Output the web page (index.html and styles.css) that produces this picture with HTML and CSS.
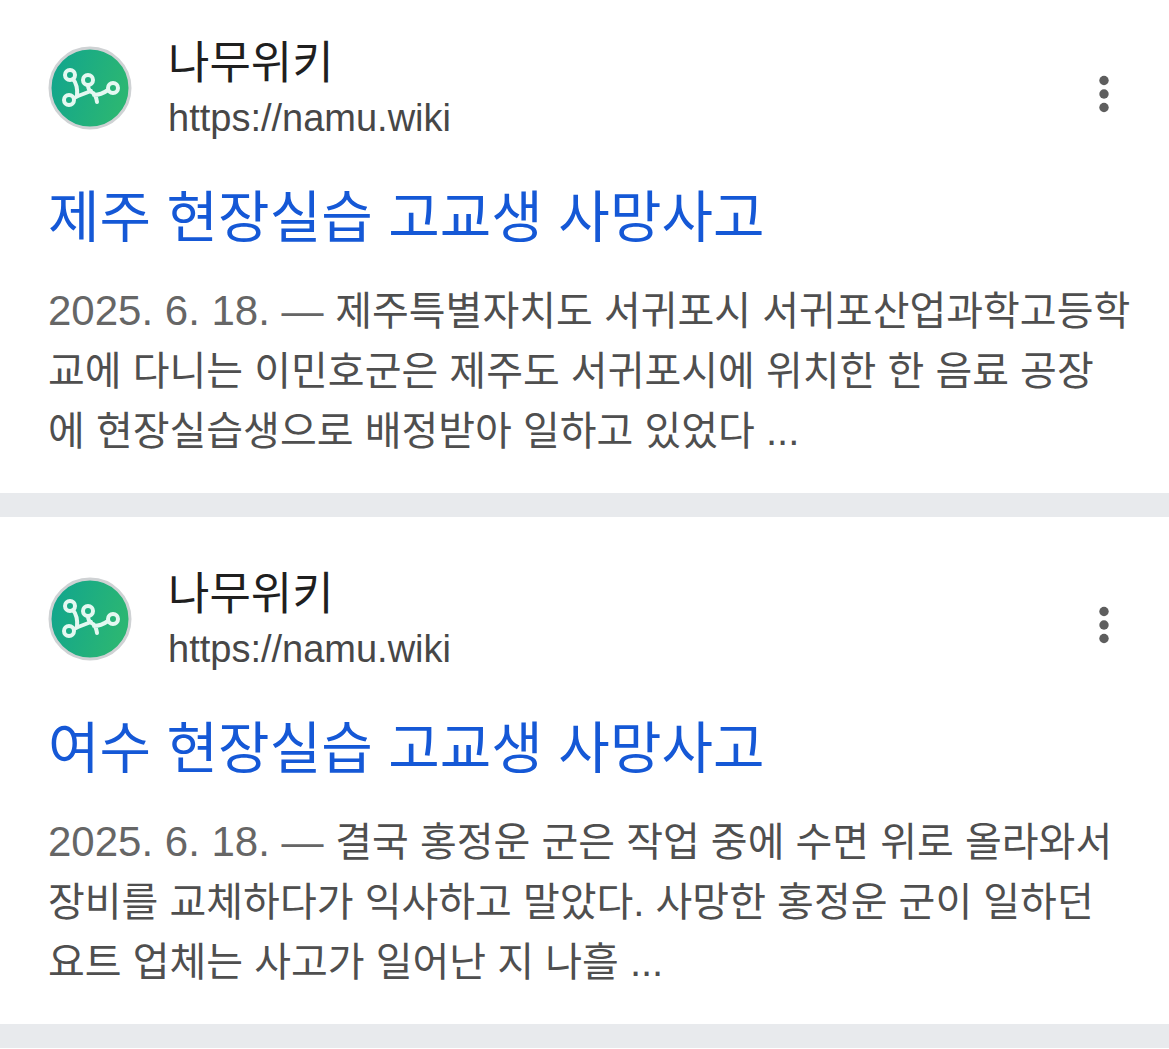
FILE: index.html
```html
<!DOCTYPE html>
<html lang="ko">
<head>
<meta charset="UTF-8">
<meta name="viewport" content="width=device-width, initial-scale=1.0">
<title>현장실습 고교생 사망사고</title>
<link rel="stylesheet" href="styles.css">
</head>
<body>
<svg class="sprite" aria-hidden="true">
  <symbol id="namu" viewBox="0 0 84 84">
    <linearGradient id="leaf" x1="0" y1="0" x2="1" y2="0.3">
      <stop offset="0" stop-color="#0fa48f"/>
      <stop offset="1" stop-color="#2bb673"/>
    </linearGradient>
    <circle cx="42" cy="42" r="40" fill="url(#leaf)" stroke="#cfd2d4" stroke-width="3"/>
    <g fill="none" stroke="#e4f8f1" stroke-width="4" stroke-linecap="round" stroke-linejoin="round">
      <circle cx="22" cy="29" r="5"/>
      <circle cx="40" cy="34" r="5"/>
      <circle cx="21" cy="54" r="5"/>
      <circle cx="65" cy="42" r="5"/>
      <path d="M25 33q5 6 4 17M26 52l4-2 13-5M40 39q0 6 5 8 3 2 4 9M46 49q7 0 14-5"/>
    </g>
  </symbol>
</svg>
<main class="results">
  <article class="result">
    <header class="source">
      <svg class="favicon" aria-hidden="true"><use href="#namu"/></svg>
      <div class="site">
        <span class="site-name">나무위키</span>
        <cite class="site-url">https://namu.wiki</cite>
      </div>
      <button class="more" type="button" aria-label="옵션">
        <svg viewBox="0 0 10 38" aria-hidden="true"><circle cx="5" cy="5.5" r="4.7"/><circle cx="5" cy="19" r="4.7"/><circle cx="5" cy="32.5" r="4.7"/></svg>
      </button>
    </header>
    <h3 class="title"><a href="#">제주 현장실습 고교생 사망사고</a></h3>
    <p class="snippet"><span class="date">2025. 6. 18. — </span>제주특별자치도 서귀포시 서귀포산업과학고등학<br>교에 다니는 이민호군은 제주도 서귀포시에 위치한 한 음료 공장<br>에 현장실습생으로 배정받아 일하고 있었다 ...</p>
  </article>
  <article class="result">
    <header class="source">
      <svg class="favicon" aria-hidden="true"><use href="#namu"/></svg>
      <div class="site">
        <span class="site-name">나무위키</span>
        <cite class="site-url">https://namu.wiki</cite>
      </div>
      <button class="more" type="button" aria-label="옵션">
        <svg viewBox="0 0 10 38" aria-hidden="true"><circle cx="5" cy="5.5" r="4.7"/><circle cx="5" cy="19" r="4.7"/><circle cx="5" cy="32.5" r="4.7"/></svg>
      </button>
    </header>
    <h3 class="title"><a href="#">여수 현장실습 고교생 사망사고</a></h3>
    <p class="snippet"><span class="date">2025. 6. 18. — </span>결국 홍정운 군은 작업 중에 수면 위로 올라와서<br>장비를 교체하다가 익사하고 말았다. 사망한 홍정운 군이 일하던<br>요트 업체는 사고가 일어난 지 나흘 ...</p>
  </article>
</main>
</body>
</html>
```
FILE: styles.css
```css
body {
  margin: 0;
  background-color: #fff;
  font-family: "Liberation Sans", "Noto Sans CJK KR", sans-serif;
  color: #1f1f1f;
}

.sprite {
  display: block;
  width: 0;
  height: 0;
}

.result {
  padding: 36px 36px 32px 48px;
  border-bottom: 24px solid #e8eaed;
}

.result + .result {
  padding-top: 50px;
}

.source {
  display: flex;
  align-items: flex-start;
}

.favicon {
  width: 84px;
  height: 84px;
  margin: 10px 36px 0 0;
}

.site {
  flex: 1;
}

.site-name,
.site-url {
  display: block;
}

.site-name {
  font-size: 45px;
  line-height: 56px;
}

.site-url {
  font-size: 38px;
  line-height: 52px;
  font-style: normal;
  color: #474747;
}

.more {
  margin: 27px 12px 0 0;
  padding: 12px;
  border: 0;
  background: none;
}

.more svg {
  display: block;
  width: 10px;
  height: 38px;
  fill: #5e5e5e;
}

.title {
  margin: 35px 0 0;
  font-size: 56px;
  line-height: 78px;
  font-weight: 400;
}

.title a {
  color: #1558d6;
  text-decoration: none;
}

.snippet {
  margin: 24px 0 0;
  font-size: 40px;
  line-height: 60px;
  color: #4f4f4f;
}

.date {
  font-size: 42px;
  color: #666;
}
```
